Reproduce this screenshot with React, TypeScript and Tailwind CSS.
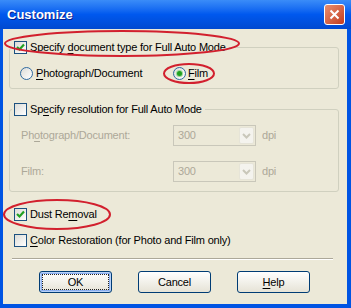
import type { ReactNode } from 'react';

function CheckBox({ checked }: { checked?: boolean }) {
  return (
    <div className="w-[13px] h-[13px] shrink-0 border border-[#1C5180] bg-gradient-to-br from-[#DCDCD7] to-white flex items-center justify-center">
      {checked && (
        <svg width="9" height="9" viewBox="0 0 9 9">
          <path d="M1 4 L3.5 6.5 L8 1.5" fill="none" stroke="#21A121" strokeWidth="2.2" />
        </svg>
      )}
    </div>
  );
}

function Radio({ checked }: { checked?: boolean }) {
  return (
    <div className="w-[13px] h-[13px] shrink-0 rounded-full border border-[#2F6AA0] bg-gradient-to-br from-[#DCDCD7] to-white flex items-center justify-center">
      {checked && <div className="w-[5px] h-[5px] rounded-full bg-[#21A121] shadow-[0_0_0_1px_#9AD89A]" />}
    </div>
  );
}

function U({ children }: { children: ReactNode }) {
  return <span className="underline underline-offset-[2px]">{children}</span>;
}

function DisabledCombo() {
  return (
    <div className="w-[83px] h-[21px] border border-[#C9C7BA] bg-[#ECE9D8] flex items-center">
      <span className="flex-1 pl-[4px] text-[#ACA899]">300</span>
      <div className="w-[15px] h-[17px] mr-[1px] bg-[#F4F3EE] border border-[#E6E4D8] rounded-[2px] flex items-center justify-center">
        <svg width="9" height="6" viewBox="0 0 9 6">
          <path d="M1 1 L4.5 4.5 L8 1" fill="none" stroke="#C9C7BA" strokeWidth="2" />
        </svg>
      </div>
    </div>
  );
}

function XPButton({ children, isDefault }: { children: ReactNode; isDefault?: boolean }) {
  return (
    <div
      className={`w-[73px] h-[22px] rounded-[3px] border border-[#003C74] bg-gradient-to-b from-white to-[#E6E3D6] flex items-center justify-center p-[2px] ${
        isDefault ? 'shadow-[inset_0_0_0_1px_#B8D1F8,inset_0_0_0_2px_#8AAEF0]' : ''
      }`}
    >
      <div className={`w-full h-full flex items-center justify-center ${isDefault ? 'border border-dotted border-[#222]' : ''}`}>
        {children}
      </div>
    </div>
  );
}

export default function App() {
  return (
    <div className="relative w-[351px] h-[308px] bg-[#0054E3] flex flex-col font-['Liberation_Sans',Arial,sans-serif] text-[11px] tracking-[-0.2px] text-black">
      {/* Title bar */}
      <div className="h-[29px] shrink-0 bg-gradient-to-b from-[#3A8CF8] via-[#0058EE] to-[#0049D0] flex items-center pl-[7px] pr-[6px]">
        <span className="flex-1 text-white font-bold text-[13px] tracking-normal [text-shadow:1px_1px_0_#0A1E8C]">Customize</span>
        <div className="w-[21px] h-[21px] rounded-[3px] border border-white bg-gradient-to-br from-[#E88E6F] to-[#C23A1A] flex items-center justify-center">
          <svg width="11" height="11" viewBox="0 0 11 11">
            <path d="M1.5 1.5 L9.5 9.5 M9.5 1.5 L1.5 9.5" stroke="white" strokeWidth="2" />
          </svg>
        </div>
      </div>

      {/* Client area */}
      <div className="flex-1 ml-[3px] mr-[4px] mb-[4px] bg-[#ECE9D8] flex flex-col">
        {/* Group 1 */}
        <div className="mt-[18px] ml-[6px] mr-[8px] border border-[#D0D0BF] rounded-[3px] pb-[8px]">
          <div className="-mt-[7px] ml-[2px] px-[2px] flex items-center gap-[3px] bg-[#ECE9D8] w-fit pr-[3px]">
            <CheckBox checked />
            <span className="leading-[13px]">
              Specify <U>d</U>ocument type for Full Auto Mode
            </span>
          </div>
          <div className="mt-[13px] ml-[10px] flex items-center h-[13px]">
            <Radio />
            <span className="ml-[3px] w-[137px] leading-[13px]">
              <U>P</U>hotograph/Document
            </span>
            <Radio checked />
            <span className="ml-[2px] leading-[13px]">
              <U>F</U>ilm
            </span>
          </div>
        </div>

        {/* Group 2 */}
        <div className="mt-[20px] ml-[6px] mr-[8px] border border-[#D0D0BF] rounded-[3px] pb-[9px]">
          <div className="-mt-[7px] ml-[2px] px-[2px] flex items-center gap-[3px] bg-[#ECE9D8] w-fit pr-[3px]">
            <CheckBox />
            <span className="leading-[13px]">
              Sp<U>e</U>cify resolution for Full Auto Mode
            </span>
          </div>
          <div className="mt-[9px] pl-[11px] flex items-center text-[#ACA899]">
            <span className="w-[152px]">
              Ph<U>o</U>tograph/Document:
            </span>
            <DisabledCombo />
            <span className="ml-[6px]">dpi</span>
          </div>
          <div className="mt-[15px] pl-[11px] flex items-center text-[#ACA899]">
            <span className="w-[152px]">Film:</span>
            <DisabledCombo />
            <span className="ml-[6px]">dpi</span>
          </div>
        </div>

        <div className="mt-[16px] ml-[11px] flex items-center gap-[3px] h-[13px]">
          <CheckBox checked />
          <span className="leading-[13px]">
            Dust Re<U>m</U>oval
          </span>
        </div>
        <div className="mt-[13px] ml-[11px] flex items-center gap-[3px] h-[13px]">
          <CheckBox />
          <span className="leading-[13px]">
            <U>C</U>olor Restoration (for Photo and Film only)
          </span>
        </div>

        <div className="mt-[11px] ml-[9px] mr-[14px] border-t border-[#ACA899] border-b border-b-white" />

        <div className="mt-[11px] pl-[36px] flex gap-[26px]">
          <XPButton isDefault>OK</XPButton>
          <XPButton>Cancel</XPButton>
          <XPButton>
            <span>
              <U>H</U>elp
            </span>
          </XPButton>
        </div>
      </div>

      {/* Red annotation ellipses */}
      <svg className="absolute inset-0 pointer-events-none" width="351" height="308">
        <ellipse cx="122" cy="43.5" rx="117" ry="12.5" fill="none" stroke="#D2202E" strokeWidth="2" />
        <ellipse cx="189" cy="73.5" rx="25" ry="9.5" fill="none" stroke="#D2202E" strokeWidth="2" />
        <ellipse cx="57" cy="214.5" rx="53" ry="14.5" fill="none" stroke="#D2202E" strokeWidth="2" />
      </svg>
    </div>
  );
}
